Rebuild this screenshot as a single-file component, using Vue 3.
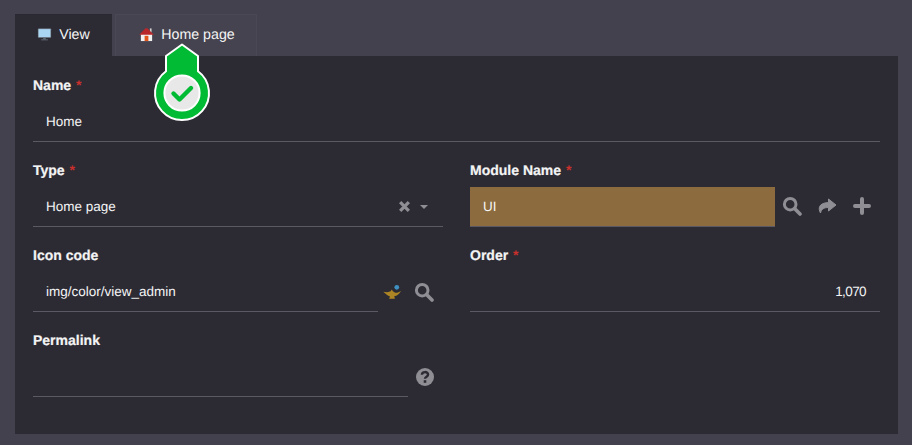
<template>
  <div class="page">
    <!-- Tabs -->
    <div class="tabs">
      <div class="tab tab-active">
        <svg class="tab-icon" viewBox="0 0 16 16">
          <rect x="1" y="1.5" width="14" height="10" rx="0.8" fill="#7d8c98" />
          <rect x="1.8" y="2.3" width="12.4" height="8.4" fill="#a9d6f2" />
          <rect x="6.6" y="11.5" width="2.8" height="1.8" fill="#5f6b75" />
          <rect x="4.4" y="13.2" width="7.2" height="1" fill="#5f6b75" />
        </svg>
        <span>View</span>
      </div>
      <div class="tab tab-home">
        <svg class="tab-icon" viewBox="0 0 16 16">
          <rect x="2" y="7" width="12" height="8" fill="#f1f1f1" />
          <rect x="6" y="9.4" width="4" height="5.6" fill="#e2561b" />
          <rect x="11.6" y="1.5" width="1.8" height="4.5" fill="#d0d0d0" />
          <path d="M0.2 8.2 L7 1.4 L9 1.4 L15.8 8.2 Z" fill="#b8282a" />
        </svg>
        <span>Home page</span>
      </div>
    </div>

    <!-- Form -->
    <div class="panel">
      <div class="form">
        <div class="row row-full">
          <label class="label">Name <em>*</em></label>
          <div class="field-line">
            <div class="field"><span>Home</span></div>
          </div>
        </div>

        <div class="row">
          <label class="label">Type <em>*</em></label>
          <div class="field-line">
            <div class="field">
              <span>Home page</span>
              <div class="select-tools">
                <svg class="clear" viewBox="0 0 12 12">
                  <path d="M2 2 L10 10 M10 2 L2 10" stroke="#8f8e94" stroke-width="3" />
                </svg>
                <i class="caret"></i>
              </div>
            </div>
          </div>
        </div>

        <div class="row">
          <label class="label">Module Name <em>*</em></label>
          <div class="with-tools">
            <div class="field-line grow">
              <div class="field field-module"><span>UI</span></div>
            </div>
            <div class="tools tools-module">
              <svg class="tool" viewBox="0 0 20 20">
                <circle cx="8.2" cy="8.2" r="5.8" fill="none" stroke="#8f8e94" stroke-width="3" />
                <path d="M12.8 12.8 L18 18" stroke="#8f8e94" stroke-width="3.6" stroke-linecap="round" />
              </svg>
              <svg class="tool" viewBox="0 0 20 20">
                <path d="M11.5 3 L19 9 L11.5 15 L11.5 11.5 C7 11.5 4.5 13 3.5 17 C1 12.5 1.5 7 11.5 6.5 Z" fill="#8f8e94" stroke="#8f8e94" stroke-width="1" stroke-linejoin="round" />
              </svg>
              <svg class="tool" viewBox="0 0 20 20">
                <path d="M10 3 V17 M3 10 H17" stroke="#8f8e94" stroke-width="4" stroke-linecap="round" />
              </svg>
            </div>
          </div>
        </div>

        <div class="row">
          <label class="label">Icon code</label>
          <div class="with-tools">
            <div class="field-line grow">
              <div class="field"><span>img/color/view_admin</span></div>
            </div>
            <div class="tools tools-icon">
              <svg class="lamp" viewBox="0 0 20 20">
                <circle cx="14.5" cy="3.5" r="2.5" fill="#3f8fc0" />
                <path d="M0.3 8.2 L4.5 8.8 C6 8.4 7.2 8 8 7.6 L9.2 5.8 L10.4 7.6 C11.5 8.6 13 9.4 14.4 9.2 C16 9 17.6 8.2 19.4 7.2 C18 8.6 17 10.4 15.6 11.4 C14.6 12.2 13.4 12.8 11.8 13 L12.6 15.6 L6.4 15.6 L7.4 13.2 C5 12.8 3 10.2 0.3 8.2 Z" fill="#ae8524" />
              </svg>
              <svg class="tool" viewBox="0 0 20 20">
                <circle cx="8.2" cy="8.2" r="5.8" fill="none" stroke="#8f8e94" stroke-width="3" />
                <path d="M12.8 12.8 L18 18" stroke="#8f8e94" stroke-width="3.6" stroke-linecap="round" />
              </svg>
            </div>
          </div>
        </div>

        <div class="row">
          <label class="label">Order <em>*</em></label>
          <div class="field-line">
            <div class="field field-number"><span>1,070</span></div>
          </div>
        </div>

        <div class="row">
          <label class="label">Permalink</label>
          <div class="with-tools">
            <div class="field-line grow">
              <div class="field"></div>
            </div>
            <div class="tools tools-help">
              <svg class="help" viewBox="0 0 18 18">
                <circle cx="9" cy="9" r="9" fill="#8f8e94" />
                <path d="M5.9 6.8 C5.9 3.2 12.1 3.2 12.1 6.6 C12.1 8.8 9 8.6 9 10.8" fill="none" stroke="#2c2b34" stroke-width="2.4" />
                <rect x="7.7" y="12.2" width="2.6" height="2.6" fill="#2c2b34" />
              </svg>
            </div>
          </div>
        </div>
      </div>
    </div>

    <!-- Saved marker -->
    <svg class="pin" viewBox="0 0 60 80">
      <path d="M30 1.5 L46 13 V28.25 A27 27 0 1 1 14 28.25 V13 Z" fill="#00bb33" stroke="#fff" stroke-width="2" stroke-linejoin="round" />
      <circle cx="30" cy="50" r="17.6" fill="#e8e8e8" stroke="#fff" stroke-width="2" />
      <path d="M21.5 50.5 L27.5 56.5 L39 45" fill="none" stroke="#00bb33" stroke-width="4.4" stroke-linecap="round" stroke-linejoin="round" />
    </svg>
  </div>
</template>

<script setup>
</script>

<style>
html,
body {
  background: #43414e;
}
</style>

<style scoped>
.page {
  position: relative;
  box-sizing: border-box;
  width: 912px;
  height: 445px;
  padding: 14px 14px 11px 15px;
  background: #43414e;
  font-family: "Liberation Sans", Arial, sans-serif;
  font-size: 14px;
  color: #f4f4f4;
  text-rendering: geometricPrecision;
  overflow: hidden;
}

/* Tabs */
.tabs {
  display: flex;
  gap: 3px;
  height: 42px;
}

.tab {
  box-sizing: border-box;
  display: flex;
  align-items: center;
  justify-content: center;
  gap: 7px;
  width: 142px;
  border: 1px solid #4a4855;
  border-bottom: none;
  background: #45434f;
  font-size: 14.2px;
  padding-bottom: 1px;
}

.tab-home {
  padding-left: 2px;
}

.tab-active {
  width: 97px;
  border: none;
  border-top: 1px solid #2a2932;
  background: #2c2b34;
}

.tab-icon {
  width: 15px;
  height: 15px;
  margin-top: -1px;
}

/* Form */
.panel {
  box-sizing: border-box;
  height: 378px;
  padding: 15px 18px 0;
  background: #2c2b34;
}

.form {
  display: grid;
  grid-template-columns: 410px 410px;
  column-gap: 27px;
  grid-auto-rows: 71px;
  row-gap: 14px;
}

.row-full {
  grid-column: 1 / -1;
}

.label {
  display: block;
  height: 29px;
  line-height: 29px;
  font-weight: 700;
  font-size: 14px;
  -webkit-text-stroke: 0.2px #f4f4f4;
}

.label em {
  font-style: normal;
  color: #c9302c;
  margin-left: 1px;
  -webkit-text-stroke: 0;
}

.field-line {
  box-sizing: border-box;
  height: 42px;
  padding-top: 2px;
  border-bottom: 1px solid #5a5964;
}

.field {
  display: flex;
  align-items: center;
  justify-content: space-between;
  height: 39px;
  padding: 0 13px;
  font-size: 13.5px;
}

.field-module {
  background: #8c6c3e;
}

.field-number {
  justify-content: flex-end;
  padding-right: 14px;
  letter-spacing: -0.6px;
}

.select-tools {
  display: flex;
  align-items: center;
  gap: 9px;
  margin-right: 2px;
}

.clear {
  width: 13px;
  height: 13px;
}

.caret {
  width: 0;
  height: 0;
  border-left: 4px solid transparent;
  border-right: 4px solid transparent;
  border-top: 4px solid #8f8e94;
}

.with-tools {
  display: flex;
}

.grow {
  flex: 1;
}

.tools {
  box-sizing: border-box;
  display: flex;
  align-items: center;
  height: 42px;
}

.tool {
  width: 20px;
  height: 20px;
}

.tools-module {
  gap: 15px;
  width: 105px;
  padding-left: 7px;
}

.tools-icon {
  gap: 12px;
  width: 65px;
  padding: 2px 0 0 5px;
}

.lamp {
  width: 19px;
  height: 19px;
  margin-top: 3px;
}

.tools-help {
  width: 35px;
  padding: 2px 0 0 8px;
}

.help {
  width: 18px;
  height: 18px;
}

/* Overlay marker */
.pin {
  position: absolute;
  left: 152px;
  top: 43px;
  width: 60px;
  height: 80px;
}
</style>
